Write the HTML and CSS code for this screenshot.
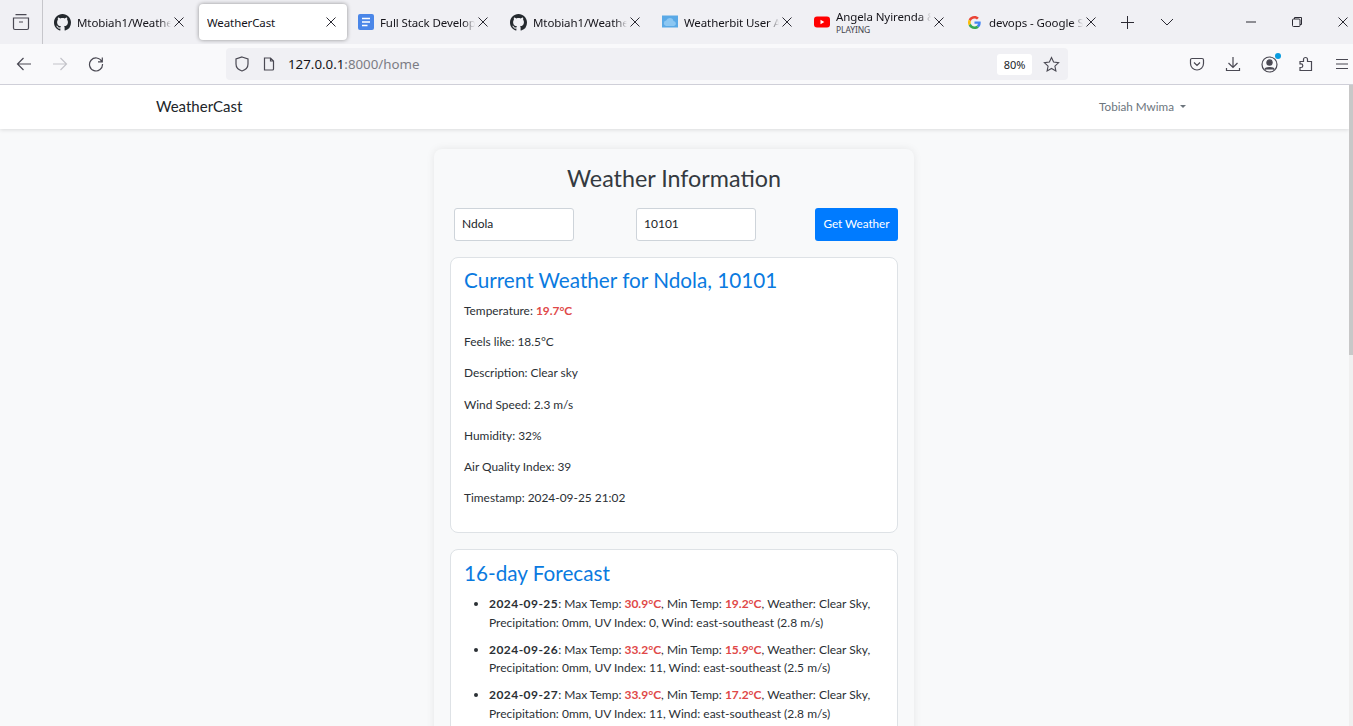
FILE: index.html
```html
<!DOCTYPE html>
<html lang="en">
<head>
    <meta charset="UTF-8">
    <meta name="viewport" content="width=device-width, initial-scale=1.0">
    <title>WeatherCast</title>
    <link rel="stylesheet" href="styles.css">
</head>
<body>
    <svg class="defs" width="0" height="0">
        <symbol id="github" viewBox="0 0 16 16"><path fill="#24292e" d="M8 0C3.58 0 0 3.58 0 8c0 3.54 2.29 6.53 5.47 7.59.4.07.55-.17.55-.38 0-.19-.01-.82-.01-1.49-2.01.37-2.53-.49-2.69-.94-.09-.23-.48-.94-.82-1.13-.28-.15-.68-.52-.01-.53.63-.01 1.08.58 1.23.82.72 1.21 1.87.87 2.33.66.07-.52.28-.87.51-1.07-1.78-.2-3.64-.89-3.64-3.95 0-.87.31-1.59.82-2.15-.08-.2-.36-1.02.08-2.12 0 0 .67-.21 2.2.82.64-.18 1.32-.27 2-.27s1.36.09 2 .27c1.53-1.04 2.2-.82 2.2-.82.44 1.1.16 1.92.08 2.12.51.56.82 1.27.82 2.15 0 3.07-1.87 3.75-3.65 3.95.29.25.54.73.54 1.48 0 1.07-.01 1.93-.01 2.2 0 .21.15.46.55.38A8.01 8.01 0 0 0 16 8c0-4.42-3.58-8-8-8z"/></symbol>
        <symbol id="close" viewBox="0 0 12 12"><path d="M1.5 1.5l9 9M10.5 1.5l-9 9" stroke="#2b2a33" stroke-width="1" fill="none"/></symbol>
    </svg>

    <div class="tabbar">
        <div class="tab-view">
            <svg width="18" height="18" viewBox="0 0 18 18" fill="none" stroke="#4a4953" stroke-width="1.200"><path d="M3.500 1.700h11M1.500 5h15v10a1.500 1.500 0 0 1-1.500 1.500H3A1.500 1.500 0 0 1 1.500 15zM7 9h4"/></svg>
        </div>
        <div class="tabs">
            <div class="tab">
                <svg class="fav" width="17" height="17"><use href="#github"/></svg>
                <span class="tab-title">Mtobiah1/WeatherCast</span>
                <svg class="tab-x" width="12" height="12"><use href="#close"/></svg>
            </div>
            <div class="tab active">
                <span class="tab-title">WeatherCast</span>
                <svg class="tab-x" width="12" height="12"><use href="#close"/></svg>
            </div>
            <div class="tab">
                <svg class="fav" width="16" height="16" viewBox="0 0 16 16"><rect width="16" height="16" rx="2" fill="#4a86e8"/><path d="M4 4.500h8M4 8h8M4 11.500h5.500" stroke="#fff" stroke-width="1.600"/></svg>
                <span class="tab-title">Full Stack Development</span>
                <svg class="tab-x" width="12" height="12"><use href="#close"/></svg>
            </div>
            <div class="tab">
                <svg class="fav" width="17" height="17"><use href="#github"/></svg>
                <span class="tab-title">Mtobiah1/WeatherCast</span>
                <svg class="tab-x" width="12" height="12"><use href="#close"/></svg>
            </div>
            <div class="tab">
                <svg class="fav" width="16" height="16" viewBox="0 0 16 16"><rect y="1.500" width="16" height="12" fill="#5aa9e6"/><path d="M4 12a2.800 2.800 0 0 1 .2-5.500 3.800 3.800 0 0 1 7.300.4A2.600 2.600 0 0 1 12 12z" fill="#8cc7f2"/></svg>
                <span class="tab-title">Weatherbit User Account</span>
                <svg class="tab-x" width="12" height="12"><use href="#close"/></svg>
            </div>
            <div class="tab">
                <svg class="fav" width="16" height="16" viewBox="0 0 16 16"><rect y="2.500" width="16" height="11" rx="3" fill="#f00"/><path d="M6.500 5.800v4.400L10.300 8z" fill="#fff"/></svg>
                <span class="tab-stack">
                    <span class="tab-title">Angela Nyirenda &amp; more</span>
                    <span class="tab-sub">PLAYING</span>
                </span>
                <svg class="tab-x" width="12" height="12"><use href="#close"/></svg>
            </div>
            <div class="tab tab-google">
                <svg class="fav" width="13" height="13" viewBox="0 0 48 48"><path fill="#ea4335" d="M24 9.500c3.500 0 6.700 1.300 9.100 3.500l6.800-6.800C35.800 2.400 30.300 0 24 0 14.600 0 6.500 5.400 2.600 13.200l7.900 6.200C12.400 13.600 17.700 9.500 24 9.500z"/><path fill="#4285f4" d="M46.900 24.500c0-1.600-.1-3.100-.4-4.500H24v9h12.900c-.6 3-2.200 5.500-4.700 7.200l7.600 5.900c4.500-4.100 7.100-10.200 7.100-17.600z"/><path fill="#fbbc05" d="M10.500 28.600c-.5-1.400-.8-3-.8-4.600s.3-3.200.8-4.600l-7.900-6.200C.9 16.500 0 20.100 0 24s.9 7.500 2.600 10.800z"/><path fill="#34a853" d="M24 48c6.500 0 11.900-2.100 15.900-5.900l-7.600-5.900c-2.100 1.400-4.900 2.300-8.300 2.300-6.300 0-11.600-4.200-13.500-9.900l-7.900 6.200C6.500 42.600 14.600 48 24 48z"/></svg>
                <span class="tab-title">devops - Google Search</span>
                <svg class="tab-x" width="12" height="12"><use href="#close"/></svg>
            </div>
            <div class="tab-plus">
                <svg width="13" height="13" viewBox="0 0 13 13"><path d="M6.500 0v13M0 6.500h13" stroke="#2b2a33" stroke-width="1"/></svg>
            </div>
            <div class="tab-more">
                <svg width="14" height="14" viewBox="0 0 14 14" fill="none"><path d="M1 4l6 6 6-6" stroke="#2b2a33" stroke-width="1"/></svg>
            </div>
        </div>
        <div class="win-btns">
            <svg width="12" height="12" viewBox="0 0 12 12"><path d="M1 6h10" stroke="#2b2a33" stroke-width="1"/></svg>
            <svg width="12" height="12" viewBox="0 0 12 12" fill="none" stroke="#2b2a33" stroke-width="1"><rect x="1.500" y="3" width="7.500" height="7.500" rx="1"/><path d="M3.500 3V1.500h7v7H9"/></svg>
            <svg width="12" height="12"><use href="#close"/></svg>
        </div>
    </div>

    <div class="toolbar">
        <div class="nav-btns">
            <svg width="16" height="16" viewBox="0 0 16 16" fill="none" stroke="#4a4953" stroke-width="1.200"><path d="M15 8H1.500M7.500 2l-6 6 6 6"/></svg>
            <svg width="16" height="16" viewBox="0 0 16 16" fill="none" stroke="#c4c4ca" stroke-width="1.200"><path d="M1 8h13.500M8.500 2l6 6-6 6"/></svg>
            <svg width="16" height="16" viewBox="0 0 16 16" fill="none" stroke="#4a4953" stroke-width="1.200"><path d="M13.800 5.500A6.500 6.500 0 1 0 14.500 8M14.300 1.500v4.300H10"/></svg>
        </div>
        <div class="urlbar">
            <svg class="url-shield" width="16" height="16" viewBox="0 0 16 16" fill="none" stroke="#4a4953" stroke-width="1.200"><path d="M8 1l6 2v5c0 3.500-2.800 6-6 7-3.200-1-6-3.500-6-7V3z"/></svg>
            <svg class="url-doc" width="14" height="14" viewBox="0 0 14 14" fill="none" stroke="#4a4953" stroke-width="1.200"><path d="M2.500 1h6l3 3v8a1 1 0 0 1-1 1h-8zM8.500 1v3h3"/></svg>
            <span class="url-text">127.0.0.1<span class="url-dim">:8000/home</span></span>
            <span class="zoom-pill">80%</span>
            <svg class="url-star" width="17" height="17" viewBox="0 0 17 17" fill="none" stroke="#4a4953" stroke-width="1.100"><path d="M8.500 1.500l2.100 4.600 5 .6-3.700 3.400 1 4.900-4.400-2.500L4.100 15l1-4.900L1.400 6.700l5-.6z"/></svg>
        </div>
        <div class="tool-btns">
            <svg width="16" height="16" viewBox="0 0 16 16" fill="none" stroke="#4a4953" stroke-width="1.200"><path d="M3 2.500h10A1.500 1.500 0 0 1 14.500 4v3.500a6.500 6.500 0 0 1-13 0V4A1.500 1.500 0 0 1 3 2.500zM5 6.500l3 3 3-3"/></svg>
            <svg width="16" height="16" viewBox="0 0 16 16" fill="none" stroke="#4a4953" stroke-width="1.200"><path d="M8 1v10M3.500 7L8 11.500 12.500 7M1.500 12v2.500h13V12"/></svg>
            <span class="profile">
                <svg width="17" height="17" viewBox="0 0 17 17" fill="none" stroke="#4a4953" stroke-width="1.200"><circle cx="8.500" cy="8.500" r="7.500"/><circle cx="8.500" cy="6.500" r="2.600" fill="#4a4953"/><path d="M3.800 13.500c1-2.500 8.400-2.500 9.400 0" fill="#4a4953"/></svg>
                <span class="profile-dot"></span>
            </span>
            <svg width="16" height="16" viewBox="0 0 16 16" fill="none" stroke="#4a4953" stroke-width="1.200"><path d="M2 5.500h3.500v-2a2 2 0 0 1 4 0v2h4v9H2v-3h1a1.800 1.800 0 0 0 0-3.600H2z"/></svg>
            <svg width="16" height="16" viewBox="0 0 16 16" stroke="#4a4953" stroke-width="1.100"><path d="M2 3.500h12M2 8h12M2 12.500h12"/></svg>
        </div>
    </div>

    <div class="viewport">
        <div class="page">
            <nav class="navbar">
                <a class="brand">WeatherCast</a>
                <a class="user">Tobiah Mwima<span class="caret"></span></a>
            </nav>

            <main class="card">
                <h2 class="title">Weather Information</h2>
                <form class="search">
                    <input class="field" type="text" value="Ndola">
                    <input class="field" type="text" value="10101">
                    <button class="btn" type="button">Get Weather</button>
                </form>

                <section class="box">
                    <h3>Current Weather for Ndola, 10101</h3>
                    <p>Temperature: <strong class="temp">19.7°C</strong></p>
                    <p>Feels like: 18.5°C</p>
                    <p>Description: Clear sky</p>
                    <p>Wind Speed: 2.3 m/s</p>
                    <p>Humidity: 32%</p>
                    <p>Air Quality Index: 39</p>
                    <p>Timestamp: 2024-09-25 21:02</p>
                </section>

                <section class="box">
                    <h3>16-day Forecast</h3>
                    <ul>
                        <li><strong class="date">2024-09-25</strong>: Max Temp: <strong class="temp">30.9°C</strong>, Min Temp: <strong class="temp">19.2°C</strong>, Weather: Clear Sky, Precipitation: 0mm, UV Index: 0, Wind: east-southeast (2.8 m/s)</li>
                        <li><strong class="date">2024-09-26</strong>: Max Temp: <strong class="temp">33.2°C</strong>, Min Temp: <strong class="temp">15.9°C</strong>, Weather: Clear Sky, Precipitation: 0mm, UV Index: 11, Wind: east-southeast (2.5 m/s)</li>
                        <li><strong class="date">2024-09-27</strong>: Max Temp: <strong class="temp">33.9°C</strong>, Min Temp: <strong class="temp">17.2°C</strong>, Weather: Clear Sky, Precipitation: 0mm, UV Index: 11, Wind: east-southeast (2.8 m/s)</li>
                    </ul>
                </section>
            </main>
        </div>
        <div class="scrollbar"><div class="thumb"></div></div>
    </div>
</body>
</html>
```

FILE: styles.css
```css
*{
    box-sizing: border-box;
}
html,body{
    height: 100%;
}
body{
    margin: 0;
    display: flex;
    flex-direction: column;
    overflow: hidden;
    font-family: "Lato","Noto Sans",sans-serif;
    color: #212529;
    background-color: #f8f9fa;
}
.defs{
    position: absolute;
}

/* browser chrome */
.tabbar{
    height: 44px;
    flex: none;
    display: flex;
    font-family: "Noto Sans","Open Sans",sans-serif;
    background-color: #f0f0f4;
}
.tab-view{
    width: 43px;
    flex: none;
    display: flex;
    align-items: center;
    justify-content: center;
    border-right: 1px solid #c6c6cb;
}
.tabs{
    display: flex;
    align-items: center;
    gap: 4px;
    margin-left: 4px;
}
.tab{
    width: 148px;
    height: 36px;
    display: flex;
    align-items: center;
    padding: 0 10px 0 7px;
    font-size: 11.500px;
    letter-spacing: -.1px;
    color: #15141a;
}
.tab.active{
    background-color: #fff;
    border-radius: 4px;
    box-shadow: 0 0 4px rgba(0,0,0,.4);
    padding-left: 8px;
}
.tab-google{
    padding-left: 9px;
}
.tab-google .fav{
    margin-right: 8px;
}
.fav{
    flex: none;
    margin-right: 6px;
}
.tab-title{
    display: block;
    flex: 1;
    min-width: 0;
    white-space: nowrap;
    overflow: hidden;
    -webkit-mask-image: linear-gradient(to right,#000 88%,transparent);
    mask-image: linear-gradient(to right,#000 88%,transparent);
}
.tab.active .tab-title{
    -webkit-mask-image: none;
    mask-image: none;
}
.tab-stack{
    flex: 1;
    min-width: 0;
    display: flex;
    flex-direction: column;
    line-height: 13px;
}
.tab-stack .tab-title{
    flex: none;
    line-height: 15px;
}
.tab-sub{
    font-size: 8.500px;
    line-height: 11px;
    color: #45444d;
}
.tab-x{
    flex: none;
    margin-left: 2px;
}
.tab-plus{
    width: 33px;
    display: flex;
    justify-content: center;
}
.tab-more{
    width: 37px;
    display: flex;
    justify-content: center;
}
.win-btns{
    margin-left: auto;
    display: flex;
    align-items: center;
    gap: 34px;
    padding: 0 4px 0 0;
}
.toolbar{
    height: 41px;
    flex: none;
    display: flex;
    align-items: center;
    font-family: "Noto Sans","Open Sans",sans-serif;
    background-color: #f9f9fb;
    border-bottom: 1px solid #cfcfd8;
}
.nav-btns{
    width: 226px;
    flex: none;
    display: flex;
    align-items: center;
    gap: 20px;
    padding-left: 16px;
}
.urlbar{
    width: 842px;
    height: 32px;
    flex: none;
    display: flex;
    align-items: center;
    background-color: #f0f0f4;
    border-radius: 4px;
    padding: 0 8px 0 8px;
}
.url-doc{
    margin-left: 12px;
}
.url-text{
    margin-left: 12px;
    font-size: 13.300px;
    color: #15141a;
    flex: 1;
}
.url-dim{
    color: #7c7c84;
}
.zoom-pill{
    width: 35px;
    height: 21px;
    display: flex;
    align-items: center;
    justify-content: center;
    background-color: #fff;
    border-radius: 3px;
    font-size: 11px;
}
.url-star{
    margin-left: 11px;
}
.tool-btns{
    flex: 1;
    display: flex;
    align-items: center;
    gap: 20px;
    padding-left: 121px;
}
.profile{
    position: relative;
    display: flex;
}
.profile-dot{
    position: absolute;
    top: -3px;
    right: -3px;
    width: 6px;
    height: 6px;
    border-radius: 50%;
    background-color: #0a9cdf;
}

/* page */
.viewport{
    flex: 1;
    min-height: 0;
    display: flex;
}
.page{
    flex: 1;
    min-width: 0;
    overflow: hidden;
}
.scrollbar{
    width: 4px;
    flex: none;
    background-color: #f0f0f0;
}
.thumb{
    height: 270px;
    background-color: #c8c8c8;
}
.navbar{
    height: 44px;
    display: flex;
    align-items: center;
    justify-content: space-between;
    background-color: #fff;
    box-shadow: 0 1px 4px rgba(0,0,0,.12);
    padding: 0 163px 2px 156px;
}
.brand{
    font-size: 15px;
    color: #212529;
}
.user{
    font-size: 11.700px;
    color: #6c757d;
    display: flex;
    align-items: center;
}
.caret{
    width: 0;
    height: 0;
    margin-left: 6px;
    border-top: 3px solid #6c757d;
    border-left: 3px solid transparent;
    border-right: 3px solid transparent;
}
.card{
    width: 480px;
    margin: 20px 0 0 434px;
    padding: 16px;
    background-color: #f8f9fa;
    border-radius: 8px;
    box-shadow: 0 0 8px rgba(0,0,0,.08);
}
.title{
    margin: 0 0 17px;
    font-size: 23.300px;
    font-weight: 400;
    line-height: 26px;
    text-align: center;
    color: #343a40;
}
.search{
    display: flex;
    align-items: center;
    justify-content: space-between;
    margin-bottom: 16px;
    padding-left: 4px;
}
.field{
    width: 120px;
    height: 33px;
    padding: 0 7px 2px;
    border: 1px solid #ced4da;
    border-radius: 3px;
    background-color: #fff;
    font-family: inherit;
    font-size: 12px;
    color: #212529;
}
.field + .field{
    margin-left: 3px;
}
.btn{
    width: 83px;
    height: 33px;
    padding: 0 0 3px;
    background-color: #007bff;
    color: white;
    border: none;
    border-radius: 3px;
    font-family: inherit;
    font-size: 11.700px;
    cursor: pointer;
}
.box{
    background-color: #fff;
    border: 1px solid #dee2e6;
    border-radius: 8px;
    padding: 8px 13px 13px;
    margin-bottom: 16px;
}
.box + .box{
    padding-top: 9px;
}
.box h3{
    margin: 0 0 7px;
    font-size: 20.700px;
    font-weight: 400;
    line-height: 28px;
    color: #0a7ae0;
}
.box p{
    margin: 0 0 12px;
    font-size: 11.900px;
    line-height: 19.200px;
    color: #2b3035;
}
.temp{
    color: #e04848 !important;
}
.box ul{
    margin: 8px 0 0;
    padding-left: 25px;
    font-size: 12px;
    line-height: 18.500px;
    color: #2b3035;
}
.box li{
    margin-bottom: 8.300px;
}
.date{
    letter-spacing: .45px;
}
```
